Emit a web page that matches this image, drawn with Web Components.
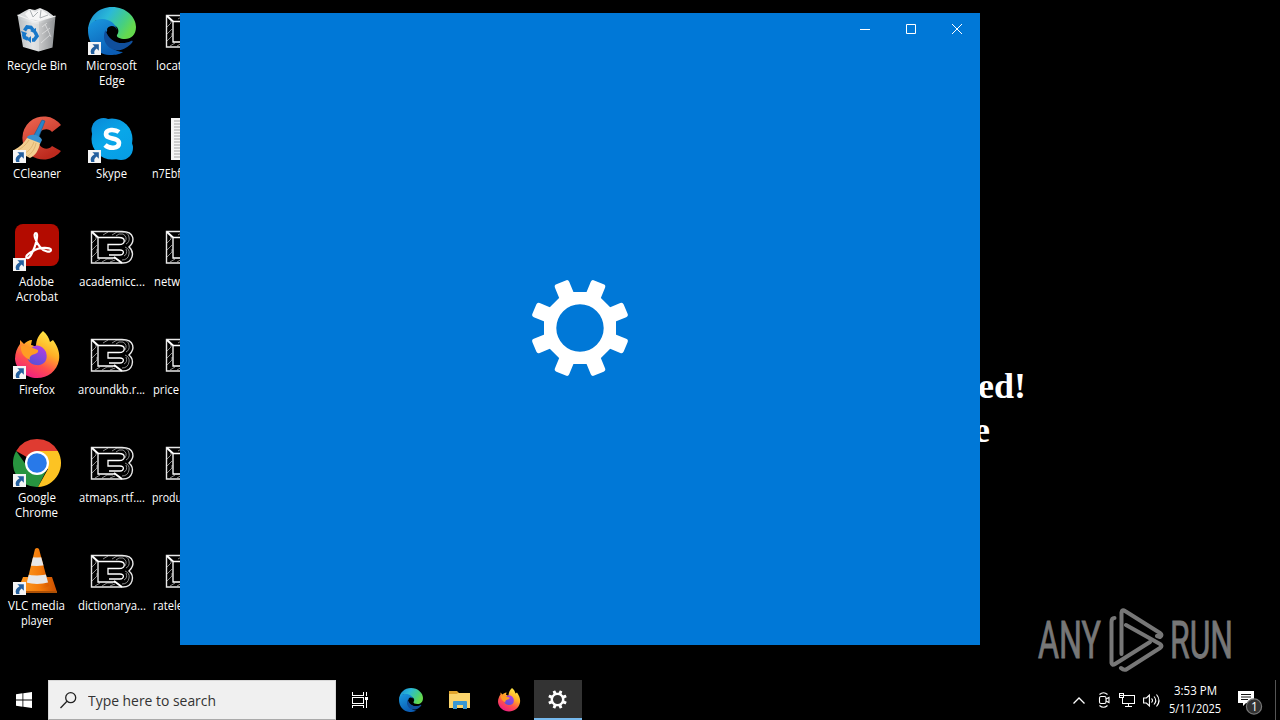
<!DOCTYPE html>
<html lang="en">
<head>
<meta charset="utf-8">
<title>Desktop</title>
<style>
html,body{margin:0;height:100%;background:#000;overflow:hidden}
body{font-family:"Open Sans","Noto Sans",sans-serif;color:#fff}
</style>
</head>
<body>
<desk-top></desk-top>
<script>
const teeth = (w, o) => Array.from({length:8},(_,i)=>`<rect x="${-w/2}" y="${-o}" width="${w}" height="20" rx="2.6" transform="rotate(${22.5+45*i})"/>`).join('');
const gear = `<svg viewBox="-50 -50 100 100"><g fill="#fff">${teeth(15.4,49.4)}<path fill-rule="evenodd" d="M-14.900-36h29.800L36-14.900v29.800L14.900 36h-29.800L-36 14.900v-29.800zM-23.700 0a23.700 23.700 0 1 0 47.400 0a23.700 23.700 0 1 0-47.400 0z"/></g></svg>`;
const ICONS = {
gear,
recycle:`<svg viewBox="0 0 48 48"><defs><linearGradient id="b"><stop stop-color="#bfc3c5"/><stop offset=".4" stop-color="#eceeef"/><stop offset=".6" stop-color="#dfe1e2"/><stop offset="1" stop-color="#969a9d"/></linearGradient></defs><path d="M5 8l7-4 4-2 6 1 5-2 7 3 8 6-3 4-15 3L8 13z" fill="#dadcdd"/><path d="M12 7l5-5 5 3 6-3 5 4 5 4-8 4-14-2z" fill="#f7f7f7"/><path d="M17 3l3 7 5-5M28 3l-1 8 8-3" fill="none" stroke="#abb0b3"/><path d="M4.500 8l18 6.500L42.500 9l-3 31.500-14 4L10 40z" fill="url(#b)" opacity=".96"/><path d="M26 15l16-5-3 30-13 4z" fill="#888" opacity=".22"/><path d="M4.500 8l18 6.500L42.500 9" fill="none" stroke="#f2f2f2" stroke-width="1.200"/><path d="M29 20l5-4M29 27l8-6M28 36l9-8M32 17l6 13" stroke="#fff" opacity=".5"/><g fill="none" stroke="#1878c9" stroke-width="3.600"><path d="M11.500 23.500l2.500-3.500 4 .5 2 2.500M22 25l2 4-3 4h-2M15 32l-3.500-1.500-1-3.500"/></g><path d="M17 24l6-3v6zM18 29v7l-4-3.500zM8 24l6 2-3 5z" fill="#1878c9"/></svg>`,
edge:`<svg viewBox="0 0 48 48"><defs><linearGradient id="a" x1="0" y1="0" x2="1" y2=".45"><stop stop-color="#1685d1"/><stop offset=".45" stop-color="#2bb9d8"/><stop offset=".8" stop-color="#46cf81"/><stop offset="1" stop-color="#65d94e"/></linearGradient><linearGradient id="b" x1="0" y1="0" x2=".5" y2="1"><stop stop-color="#1a9ae0"/><stop offset="1" stop-color="#0b5db5"/></linearGradient></defs><path d="M0 23C1 9 11 0 24 0c14 0 24 10 24 20 0 8-5 12-11 12-5 0-9-2-8-4 3-4 1-9-4-10L8 13z" fill="url(#a)"/><path d="M0 23c1-7 7-11 14-11 8 0 14 5 15 11-8-5-14 3-11 10 3 7 10 12 17 12-4 3-10 3-14 3C8 47 0 36 0 23z" fill="url(#b)"/><path d="M17.500 23c-5 10 3 22 15 20 5-1 10-5 12-8 .5-1-.3-1.700-1.500-1-10 5-22 1-25.500-11z" fill="#104f9c"/><path d="M19 22c3-5 9-3 10 1 .5 2-1 4-1.500 5-.5 3 3 6 9 6h5c-9 3-22 0-22.500-12z" fill="#000"/></svg>`,
ccleaner:`<svg viewBox="0 0 48 48"><defs><linearGradient id="a" x2=".5" y2="1"><stop stop-color="#ee6954"/><stop offset="1" stop-color="#bd2a1e"/></linearGradient></defs><path d="M48 10A21.500 21.500 0 1 0 48 36L39 31c-4 5-14 3-14-7s10-12 14-7z" fill="url(#a)"/><path d="M29 5l3 1-7 18-5-2z" fill="#2784c9" stroke="#185b93" stroke-width=".6"/><path d="M14 22c4-4 13-2 15 3l-2 4-12-5z" fill="#3c91cf"/><path d="M14 23l13 5c-1 7-5 13-10 15L1 35c6-3 10-7 13-12z" fill="#f3cf91"/><path d="M5 35c6-3 9-7 11-10M10 39c7-3 9-7 11-12M15 41c5-4 7-8 8-13" fill="none" stroke="#d9ad66" stroke-width=".8"/></svg>`,
skype:`<svg viewBox="0 0 48 48"><defs><linearGradient id="a" gradientUnits="userSpaceOnUse" x1="8" y1="3" x2="34" y2="45"><stop stop-color="#098bd8"/><stop offset=".5" stop-color="#08a7e9"/><stop offset="1" stop-color="#079ee5"/></linearGradient></defs><g fill="url(#a)"><circle cx="15.500" cy="15" r="12"/><circle cx="33" cy="33" r="12"/><circle cx="24" cy="24" r="20.500"/></g><path d="M31 17c-4-3-13-3-13 2 0 6 13 3 13 9 0 6-10 6-14 2" fill="none" stroke="#fff" stroke-width="4.600"/></svg>`,
acrobat:`<svg viewBox="0 0 48 48"><rect x="2" y="1" width="44" height="42" rx="8" fill="#b30b00"/><path d="M23 10c-3 0-1 8 4 14 4 5 11 6 11 3s-12-3-18 1c-6 3-8 6-6 7 3 1 6-7 8-12 2-6 3-13 1-13z" fill="none" stroke="#fff" stroke-width="2.200"/></svg>`,
firefox:`<svg viewBox="0 0 48 48"><defs><linearGradient id="a" x1=".8" y1="0" x2=".3" y2="1"><stop stop-color="#fff04a"/><stop offset=".4" stop-color="#ffae25"/><stop offset=".68" stop-color="#ff504c"/><stop offset="1" stop-color="#ed1b85"/></linearGradient><linearGradient id="b" x1=".7" y1="0" x2=".2" y2="1"><stop stop-color="#b33de2"/><stop offset="1" stop-color="#5152d7"/></linearGradient></defs><path d="M30 0c4 3 6 7 7 11l3-2c5 7 7 13 6 20C44 40 35 47 24 47S3 39 2 28c0-6 2-11 5-15V9l4 4c2-2 5-4 8-4l-1 5c2 0 3 1 5 2 0-8 3-12 7-16z" fill="url(#a)"/><path d="M16 21c4-9 13-8 17 0 3 10-4 14-10 13-7-1-11-7-7-13z" fill="url(#b)"/><path d="M8 15c5-1 11 2 17 4 1 3-3 4-6 5-2 1-3 3-2 5-5-2-10-7-9-14z" fill="#ff9c24"/></svg>`,
chrome:`<svg viewBox="0 0 48 48"><path d="M24 24L3.200 12A24 24 0 0 1 44.800 12z" fill="#df3b31"/><path d="M3.200 12A24 24 0 0 0 25 48l9-18-18 0z" fill="#27943f"/><path d="M24 24V12h20.800A24 24 0 0 1 25 48l10-18z" fill="#fdc323"/><circle cx="24" cy="24" r="12" fill="#fff"/><circle cx="24" cy="24" r="9.800" fill="#2879e9"/></svg>`,
vlc:`<svg viewBox="0 0 48 48"><defs><linearGradient id="a"><stop stop-color="#ff9d22"/><stop offset=".6" stop-color="#f37908"/><stop offset="1" stop-color="#c94d00"/></linearGradient><clipPath id="c"><path d="M22 2q2-2 4 0l10 37q-12 7-23 0z"/></clipPath></defs><path d="M10 30h29l5 15H4z" fill="url(#a)"/><path d="M4 44h40v2H4z" fill="#ae5105"/><g clip-path="url(#c)"><path fill="url(#a)" d="M8 0h32v48H8z"/><path d="M10 9q14 3 28 0v8q-14 4-28 0zM8 26q16 5 32 0v8q-16 6-32 0z" fill="#e7e7e7"/></g></svg>`,
lockbit:`<svg viewBox="0 0 48 48" fill="none"><g stroke="#999" stroke-width=".9"><path d="M15 12l5-3M24 12l5-3h5q6 0 7 5 1 5-3 7M28 13l3-2h4q5 3 2 8M37 24q5 2 4 7-1 6-7 6M38 26q2 5-2 7M4 20l4-4v-3M4 27l5-5M4 34l5-5v-3M7 39l5-3M14 39l5-3h6M22 39l5-2"/></g><path d="M3.500 8.500H34c13 0 13 10 7 15.500 6 5 4 16-6 16H3.500z" stroke="#e8e8e8" stroke-width="1.400"/><path d="M10 14.500V35h17M10 14.500h21c7 0 7 7 0 7H20V27h12c5 0 4 5 0 5H21" stroke="#fff" stroke-width="1.300"/><path d="M4 9l6 5.500M26 34l8 6" stroke="#fff" stroke-width="2"/></svg>`,
doc:`<svg viewBox="0 0 48 48"><path d="M8 3h34v42H8z" fill="#f5f5f5"/><path d="M11 6h28M11 9h28M11 12h28M11 15h28M11 18h28M11 21h28M11 24h28M11 27h28M11 30h28M11 33h28M11 36h28M11 39h28M11 42h28" stroke="#a5a5a5"/></svg>`,
start:`<svg viewBox="0 0 16 16"><path d="M0 2.300l6.500-1v6.300H0zM7.300 1.200L16 0v7.600H7.300zM0 8.400h6.500v6.300L0 13.800zM7.300 8.400H16V16l-8.700-1.200z" fill="#fff"/></svg>`,
search:`<svg viewBox="0 0 17 17" fill="none" stroke="#222" stroke-width="1.300"><circle cx="10.700" cy="5.700" r="5"/><path d="M7 9.300L.5 16"/></svg>`,
taskview:`<svg viewBox="0 0 17 16" fill="none" stroke="#fff" shape-rendering="crispEdges"><path d="M.5 0v3.500h11V0M.5 5.500h11v6H.5zM.5 16v-2.500h11V16M14.500 0v4M14.500 8v8"/><path fill="#fff" stroke="none" d="M13 5h3v3h-3z"/></svg>`,
folder:`<svg viewBox="0 0 22 18"><path d="M0 0h8l2 2h11v3H0z" fill="#e2a52d"/><path d="M0 3h8l1-1h12v15H0z" fill="#fbd46c"/><path d="M4 18v-7q0-1 1-1h12q1 0 1 1v7h-4v-4H8v4z" fill="#3997d3"/></svg>`,
up:`<svg viewBox="0 0 12 7" fill="none" stroke="#fff" stroke-width="1.300"><path d="M.5 6.500L6 1l5.500 5.500"/></svg>`,
cam:`<svg viewBox="0 0 12 16" fill="none" stroke="#fff" stroke-width="1.100"><rect x="1.500" y="4.500" width="6.500" height="7" rx="1.500"/><path d="M8 7l3-1.500v5L8 9M1.500 2.500q4-3.500 8 0M1.500 13.500q4 3.500 8 0"/></svg>`,
net:`<svg viewBox="0 0 17 15" fill="none" stroke="#fff" shape-rendering="crispEdges"><path d="M5 2.500h10.500v8H3.500V5M9.500 11v3M6 13.500h7M.5 .5h4v4h-4zM1 2.500h3"/></svg>`,
sound:`<svg viewBox="0 0 17 15" fill="none" stroke="#fff" stroke-width="1.100"><path d="M.6 5h2.800l3-3v11l-3-3H.6zM8.500 5.500q2 2 0 4M11 3.500q3.500 4 0 8M13.500 1.500q5 6 0 12"/></svg>`,
note:`<svg viewBox="0 0 24 25"><path d="M0 0h16v12H8l-3 3v-3H0z" fill="#fff"/><path d="M3 3.500h10M3 6h10M3 8.500h7" stroke="#111"/><circle cx="16" cy="15.500" r="7.600" fill="#333" stroke="#777" stroke-width="1.200"/></svg>`
};
class El extends HTMLElement{
  connectedCallback(){
    if(!this.shadowRoot) this.attachShadow({mode:'open'});
    this.shadowRoot.innerHTML=this.view();
    this.ready&&this.ready();
  }
}
customElements.define('ui-icon',class extends El{
  view(){return `<style>:host{display:block;flex:none}svg{display:block;width:100%;height:100%;overflow:visible}</style>${ICONS[this.getAttribute('name')]}`}
});
// Single line of text condensed or widened to a given advance width.
customElements.define('fit-text',class extends El{
  view(){return `<style>:host{display:block;width:${this.getAttribute('w')}px;white-space:nowrap;flex:none}span{display:inline-block;transform-origin:0 50%}</style><span><slot></slot></span>`}
  ready(){const s=this.shadowRoot.querySelector('span');const w=s.getBoundingClientRect().width;if(w)s.style.transform=`scaleX(${this.getAttribute('w')/w})`}
});
customElements.define('desk-icon',class extends El{
  view(){
    const link=this.hasAttribute('link');
    const lines=this.getAttribute('lines').split('|').map(l=>{const [t,w]=l.split('~');return `<fit-text w="${w}">${t}</fit-text>`}).join('');
    return `<style>:host{display:flex;flex-direction:column;align-items:center;height:108px;width:74px;box-sizing:border-box;padding-top:7px}
    .pic{position:relative;width:48px;height:48px}.pic ui-icon{width:48px;height:48px}
    .link{position:absolute;left:0;bottom:0;width:13px;height:13px}
    .labels{display:flex;flex-direction:column;align-items:center;width:74px;box-sizing:border-box;padding:3px 1px 0 0;font-size:12px;line-height:15px;text-shadow:0 1px 1px #000}
    :host([cut]) .labels{align-items:flex-start;padding-left:var(--start)}</style>
    <div class="pic"><ui-icon name="${this.getAttribute('icon')}"></ui-icon>${link?`<svg class="link" viewBox="0 0 12 12"><path fill="#f5f5f5" d="M0 0h12v12H0z"/><path d="M4 2h6v6L8 6Q5 8 6 11H3Q1 7 6 4z" fill="#235f9e"/></svg>`:''}</div><div class="labels">${lines}</div>`}
});
customElements.define('app-window',class extends El{
  view(){return `<style>:host{position:absolute;left:180px;top:13px;width:800px;height:632px;background:#0078d7;display:flex;flex-direction:column}
  header{display:flex;justify-content:flex-end;height:32px}header div{width:46px;display:flex;justify-content:center;padding-top:11px;box-sizing:border-box}header svg{width:10px;height:10px;fill:none;stroke:#fff;overflow:visible}
  main{flex:1;display:grid;place-items:center;padding-bottom:34px}ui-icon{width:100px;height:100px}</style>
  <header><div><svg viewBox="0 0 10 10"><path d="M0 5.500h10"/></svg></div><div><svg viewBox="0 0 10 10"><path d="M.5.5h9v9h-9z"/></svg></div><div><svg viewBox="0 0 10 10"><path d="M0 0l10 10M10 0L0 10"/></svg></div></header><main><ui-icon name="gear"></ui-icon></main>`}
});
customElements.define('wall-paper',class extends El{
  view(){return `<style>:host{position:absolute;inset:0}.msg{position:absolute;left:978px;top:364px;font:bold 36px/44px "Liberation Serif",serif}.msg div+div{margin-left:-4px}
  .mark{position:absolute;left:1038px;top:604px;height:74px;display:flex;align-items:center;color:#777;font:400 52px/76px Roboto,sans-serif;-webkit-text-stroke:.9px #777}.mark svg{width:56px;height:64px;margin:0 5px 2px 8px;fill:none;stroke:#777;stroke-width:4;stroke-linecap:round;stroke-linejoin:round}</style>
  <div class="msg"><div>ed!</div><div>e</div></div>
  <div class="mark"><fit-text w="63">ANY</fit-text><svg viewBox="0 0 56 64"><path d="M12.500 46V4.500Q13 1 16 3L51 25Q54 27 51 29L48 28"/><path d="M5.500 10Q2.500 10 2.500 14V55Q3 58 6 56L41 34"/><path d="M17 17L51 36Q54 38 51 40L18 61Q15 63 12 60"/></svg><fit-text w="63">RUN</fit-text></div>`}
});
customElements.define('task-bar',class extends El{
  view(){return `<style>:host{position:absolute;left:0;top:680px;width:1280px;height:40px;display:flex;background:#000}
  .b{width:48px;display:grid;place-items:center;flex:none;box-sizing:border-box}.search{width:288px;box-sizing:border-box;background:#f0f0f0;border:1px solid #d8d8d8;border-bottom-color:#aaa;display:flex;align-items:center;padding-left:11px;gap:11px;color:#333;font-size:15px}
  .apps{display:flex;margin-left:3px;gap:1px}.active{background:#333;border-bottom:2px solid #76b9ed;padding:1px 1px 0 0}
  .tray{margin-left:auto;display:flex;align-items:center}.clock{width:52px;display:flex;flex-direction:column;align-items:center;font-size:12px;line-height:18px;margin:0 17px 0 9px}
  .note{position:relative;width:24px;height:25px;margin:7px 13px 0 0}.note span{position:absolute;left:13px;top:8px;font-size:12px;line-height:16px}.show{width:1px;height:40px;background:#555;margin-right:4px}</style>
  <div class="b"><ui-icon name="start" style="width:16px;height:16px"></ui-icon></div>
  <div class="search"><ui-icon name="search" style="width:17px;height:17px"></ui-icon><fit-text w="128">Type here to search</fit-text></div>
  <div class="b"><ui-icon name="taskview" style="width:17px;height:16px"></ui-icon></div>
  <div class="apps"><div class="b"><ui-icon name="edge" style="width:24px;height:24px"></ui-icon></div><div class="b"><ui-icon name="folder" style="width:22px;height:18px"></ui-icon></div><div class="b"><ui-icon name="firefox" style="width:24px;height:24px"></ui-icon></div><div class="b active"><ui-icon name="gear" style="width:19px;height:19px"></ui-icon></div></div>
  <div class="tray"><ui-icon name="up" style="width:12px;height:7px;margin-right:13px"></ui-icon><ui-icon name="cam" style="width:12px;height:16px;margin-right:9px"></ui-icon><ui-icon name="net" style="width:17px;height:15px;margin-right:7px"></ui-icon><ui-icon name="sound" style="width:17px;height:15px"></ui-icon><div class="clock"><fit-text w="43">3:53 PM</fit-text><fit-text w="52">5/11/2025</fit-text></div><div class="note"><ui-icon name="note" style="width:24px;height:25px"></ui-icon><span>1</span></div><div class="show"></div></div>`}
});
customElements.define('desk-top',class extends El{
  view(){
    const c1=[['recycle','Recycle Bin~60',0],['ccleaner','CCleaner~48',1],['acrobat','Adobe~35|Acrobat~42',1],['firefox','Firefox~36',1],['chrome','Google~38|Chrome~43',1],['vlc','VLC media~57|player~32',1]];
    const c2=[['edge','Microsoft~51|Edge~26',1],['skype','Skype~31',1],['lockbit','academicc...~66',0],['lockbit','aroundkb.r...~67',0],['lockbit','atmaps.rtf....~66',0],['lockbit','dictionarya...~68',0]];
    const c3=[['lockbit','locat~26',6],['doc','n7Ebf~29',2],['lockbit','netw~26',4],['lockbit','price~26',3],['lockbit','produ~30',2],['lockbit','ratele~30',3]];
    const col=a=>`<div>${a.map(([i,l,k])=>`<desk-icon icon="${i}" lines="${l}" ${k?'link':''}></desk-icon>`).join('')}</div>`;
    return `<style>:host{display:block;position:relative;width:1280px;height:720px;overflow:hidden;background:#000}.grid{position:relative;display:flex;gap:1px;width:180px;overflow:hidden}.grid>div{flex:none}</style>
    <wall-paper></wall-paper><div class="grid">${col(c1)}${col(c2)}<div>${c3.map(([i,l,s])=>`<desk-icon cut style="--start:${s}px" icon="${i}" lines="${l}"></desk-icon>`).join('')}</div></div><app-window></app-window><task-bar></task-bar>`}
});
</script>
</body>
</html>
